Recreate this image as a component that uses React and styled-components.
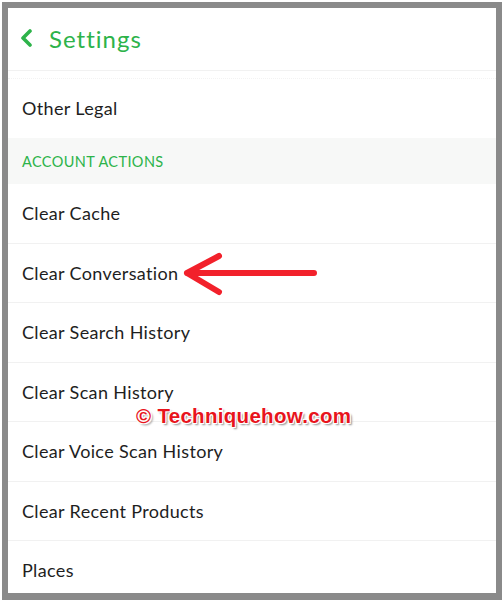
import React from 'react'
import styled, { createGlobalStyle } from 'styled-components'

const Global = createGlobalStyle`
  * { box-sizing: border-box; }
  html, body { margin: 0; padding: 0; background: #ffffff; }
  body { font-family: "Lato", "Noto Sans", sans-serif; }
`

const items = [
  'Clear Cache',
  'Clear Conversation',
  'Clear Search History',
  'Clear Scan History',
  'Clear Voice Scan History',
  'Clear Recent Products',
  'Places',
]

export default function App() {
  return (
    <>
      <Global />
      <Frame>
        <Screen>
          <Header>
            <svg width="14" height="18" viewBox="0 0 14 18">
              <path d="M11 2 L4 9 L11 16" fill="none" stroke="#2db34a" strokeWidth="3.6" strokeLinecap="round" strokeLinejoin="round" />
            </svg>
            <Title>Settings</Title>
          </Header>
          <Spacer />
          <Row tall>Other Legal</Row>
          <Section>ACCOUNT ACTIONS</Section>
          {items.map((label) => (
            <Row key={label}>{label}</Row>
          ))}
          <Arrow width="150" height="50" viewBox="0 0 150 50">
            <path d="M132 22 L5 22 M5 22 L37 5 M5 22 L37 41" fill="none" stroke="#f2212b" strokeWidth="6" strokeLinecap="round" strokeLinejoin="round" />
          </Arrow>
          <Watermark>© Techniquehow.com</Watermark>
        </Screen>
      </Frame>
    </>
  )
}

const Frame = styled.div`
  width: 500px;
  height: 598px;
  margin: 2px 0 0 2px;
  border: 6px solid #8a8a8a;
  border-bottom-width: 7px;
  background: #ffffff;
  overflow: hidden;
`

const Screen = styled.div`
  position: relative;
  display: flex;
  flex-direction: column;
  height: 100%;
`

const Header = styled.div`
  height: 63px;
  display: flex;
  align-items: center;
  gap: 16px;
  padding: 0 0 2px 11px;
  border-bottom: 1px solid #f1f1f1;
  flex-shrink: 0;
`

const Title = styled.div`
  color: #2db34a;
  font-size: 24px;
  letter-spacing: 1px;
`

const Spacer = styled.div`
  height: 8px;
  flex-shrink: 0;
  border-bottom: 1px dotted #f3f3f3;
`

const Row = styled.div`
  height: ${(p) => (p.tall ? '59px' : '59.5px')};
  flex-shrink: 0;
  display: flex;
  align-items: center;
  padding: 0 0 0 14px;
  font-size: 18px;
  letter-spacing: 0.35px;
  color: #1e1e1e;
  border-bottom: 1px solid ${(p) => (p.tall ? 'transparent' : '#f1f1f1')};
`

const Section = styled.div`
  height: 46px;
  flex-shrink: 0;
  display: flex;
  align-items: center;
  padding: 0 0 0 14px;
  background: #f7f8f7;
  color: #2db34a;
  font-size: 14.5px;
  letter-spacing: 0.4px;
`

const Arrow = styled.svg`
  position: absolute;
  left: 174px;
  top: 243px;
`

const Watermark = styled.div`
  position: absolute;
  left: 128px;
  top: 396px;
  font-family: "Liberation Sans", sans-serif;
  font-weight: bold;
  font-size: 20.5px;
  letter-spacing: 0.3px;
  color: #e8141c;
  text-shadow: -1px -1px 0 #fff, 1px -1px 0 #fff, -1px 1px 0 #fff, 1px 1px 0 #fff, 2px 2px 2px #888;
`
